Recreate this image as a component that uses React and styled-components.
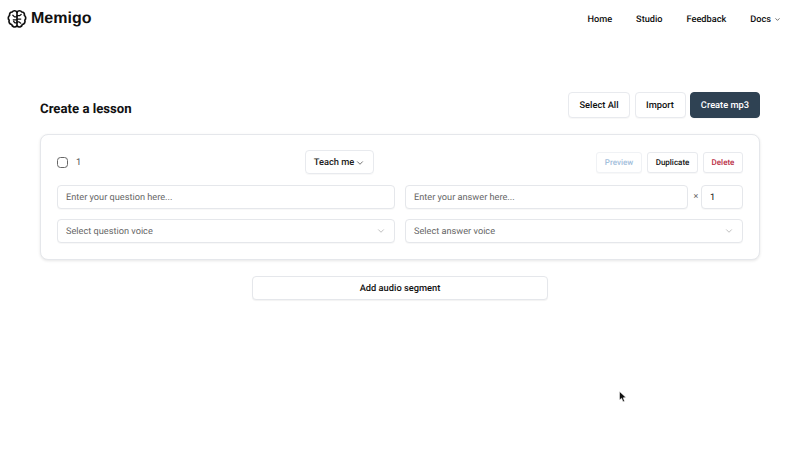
import React from "react";
import styled, { createGlobalStyle } from "styled-components";
import { ChevronDown } from "lucide-react";

const GlobalStyle = createGlobalStyle`
  html, body {
    margin: 0;
    padding: 0;
    background: #fff;
    font-family: Roboto, "Liberation Sans", sans-serif;
    color: #111;
    text-rendering: geometricPrecision;
  }
  * {
    box-sizing: border-box;
  }
  button {
    text-rendering: geometricPrecision;
  }
`;

const Page = styled.div`
  position: relative;
  width: 800px;
  height: 460px;
  overflow: hidden;
`;

const Header = styled.header`
  display: flex;
  align-items: center;
  justify-content: space-between;
  height: 38px;
  padding: 0 19px 0 7px;
`;

const Logo = styled.div`
  display: flex;
  align-items: center;
  gap: 4px;
  font-family: "Liberation Sans", Arial, sans-serif;
  font-size: 16px;
  font-weight: 700;
  color: #111;
`;

const Nav = styled.nav`
  display: flex;
  align-items: center;
  gap: 24px;
  padding-top: 1px;
`;

const NavLink = styled.a`
  display: flex;
  align-items: center;
  gap: 3px;
  font-size: 9.2px;
  font-weight: 500;
  color: #111;
`;

const Main = styled.main`
  display: flex;
  flex-direction: column;
  padding: 54px 40px 0;
`;

const TitleRow = styled.div`
  display: flex;
  align-items: center;
  justify-content: space-between;
  height: 26px;
  margin-bottom: 16px;
`;

const Title = styled.h1`
  margin: 9px 0 0;
  font-size: 13.2px;
  font-weight: 700;
  color: #111;
`;

const Actions = styled.div`
  display: flex;
  gap: 4.5px;
`;

const ActionButton = styled.button`
  height: 26px;
  width: ${(p) => p.$width}px;
  padding: 1px 0 0;
  border: 1px solid ${(p) => (p.$dark ? "#2f4253" : "#e8eaee")};
  border-radius: 4px;
  background: ${(p) => (p.$dark ? "#2f4253" : "#fff")};
  color: ${(p) => (p.$dark ? "#fff" : "#111")};
  font-family: inherit;
  font-size: 9.3px;
  font-weight: 500;
  box-shadow: 0 1px 1px rgba(0, 0, 0, 0.03);
`;

const Card = styled.section`
  display: flex;
  flex-direction: column;
  gap: 10px;
  height: 126px;
  padding: 15px 16px 16px;
  border: 1px solid #e5e7eb;
  border-radius: 8px;
  background: #fff;
  box-shadow: 0 1px 3px rgba(0, 0, 0, 0.1);
`;

const TopRow = styled.div`
  display: grid;
  grid-template-columns: 248px 69px 1fr;
  align-items: center;
  height: 24px;
  margin-bottom: 1px;
`;

const Segment = styled.div`
  display: flex;
  align-items: center;
  gap: 8px;
  padding-top: 1px;
  font-size: 9.3px;
  color: #555;
`;

const Check = styled.span`
  width: 11px;
  height: 11px;
  border: 1px solid #666;
  border-radius: 3.5px;
  background: #fff;
`;

const ModeSelect = styled.div`
  display: flex;
  align-items: center;
  justify-content: center;
  gap: 1px;
  height: 24px;
  padding-top: 1px;
  border: 1px solid #e8eaee;
  border-radius: 4px;
  font-size: 9.3px;
  font-weight: 500;
  color: #222;
  box-shadow: 0 1px 1px rgba(0, 0, 0, 0.03);
`;

const RowActions = styled.div`
  display: flex;
  justify-content: flex-end;
  gap: 5px;
`;

const SmallButton = styled.button`
  height: 21px;
  width: ${(p) => p.$width}px;
  padding: 1px 0 0;
  border: 1px solid ${(p) => (p.$faint ? "#f0f2f5" : "#e8eaee")};
  border-radius: 3px;
  background: #fff;
  color: ${(p) => p.$color};
  font-family: inherit;
  font-size: 8px;
  font-weight: 500;
  box-shadow: 0 1px 1px rgba(0, 0, 0, 0.03);
`;

const FieldRow = styled.div`
  display: grid;
  grid-template-columns: 338px 1fr;
  gap: 10px;
`;

const AnswerGroup = styled.div`
  display: flex;
  align-items: center;
`;

const Field = styled.div`
  display: flex;
  align-items: center;
  justify-content: space-between;
  flex: ${(p) => (p.$fixed ? "0 0 42px" : "1")};
  height: 24px;
  padding: 0 8px;
  border: 1px solid #e5e7eb;
  border-radius: 4px;
  background: #fff;
  font-size: 9.2px;
  color: ${(p) => (p.$filled ? "#111" : "#666")};
  box-shadow: 0 1px 1px rgba(0, 0, 0, 0.03);
`;

const Times = styled.span`
  width: 13px;
  padding-left: 3px;
  text-align: center;
  font-size: 9px;
  color: #666;
`;

const AddRow = styled.div`
  display: flex;
  justify-content: center;
  margin-top: 16px;
`;

const AddButton = styled.button`
  width: 296px;
  height: 24px;
  padding: 0;
  border: 1px solid #e5e7eb;
  border-radius: 4px;
  background: #fff;
  font-family: inherit;
  font-size: 9.3px;
  font-weight: 500;
  color: #111;
  box-shadow: 0 1px 1px rgba(0, 0, 0, 0.05);
`;

const Cursor = styled.svg`
  position: absolute;
  left: 619px;
  top: 391px;
`;

const BrainLogo = () => (
  <svg width="20" height="20" viewBox="0 0 24 24" fill="none" stroke="#111" strokeWidth="2" strokeLinecap="round" strokeLinejoin="round">
    <path d="M12 4C10.8 1.6 7.6 1.4 6.2 3.6C4 3.6 2.6 5.6 3.2 7.6C1.2 9 1 12 2.6 13.4C1.8 15.8 3.2 18.2 5.6 18.6C6.2 21.4 10 22.8 12 20.2C14 22.8 17.8 21.4 18.4 18.6C20.8 18.2 22.2 15.8 21.4 13.4C23 12 22.8 9 20.8 7.6C21.4 5.6 20 3.6 17.8 3.6C16.4 1.4 13.2 1.6 12 4Z" />
    <path d="M12 4V20.2" />
    <path d="M12 9.5H9L7 7.5M12 13H7.5M12 16.5H9.5L8 15M12 8H15L17 6.5M12 12H16.5M12 15.5H14.5L16.5 17" strokeWidth="1.5" />
  </svg>
);

const voices = ["Select question voice", "Select answer voice"];

export default function App() {
  return (
    <Page>
      <GlobalStyle />
      <Header>
        <Logo>
          <BrainLogo />
          Memigo
        </Logo>
        <Nav>
          <NavLink>Home</NavLink>
          <NavLink>Studio</NavLink>
          <NavLink>Feedback</NavLink>
          <NavLink>
            Docs <ChevronDown size={7} strokeWidth={2} />
          </NavLink>
        </Nav>
      </Header>
      <Main>
        <TitleRow>
          <Title>Create a lesson</Title>
          <Actions>
            <ActionButton $width={62}>Select All</ActionButton>
            <ActionButton $width={51}>Import</ActionButton>
            <ActionButton $width={70} $dark>
              Create mp3
            </ActionButton>
          </Actions>
        </TitleRow>
        <Card>
          <TopRow>
            <Segment>
              <Check />1
            </Segment>
            <ModeSelect>
              Teach me <ChevronDown size={10} strokeWidth={1.5} />
            </ModeSelect>
            <RowActions>
              <SmallButton $width={46} $faint $color="#a3c0dc">
                Preview
              </SmallButton>
              <SmallButton $width={51} $color="#111">
                Duplicate
              </SmallButton>
              <SmallButton $width={40} $color="#b92d45">
                Delete
              </SmallButton>
            </RowActions>
          </TopRow>
          <FieldRow>
            <Field>Enter your question here...</Field>
            <AnswerGroup>
              <Field>Enter your answer here...</Field>
              <Times>×</Times>
              <Field $fixed $filled>
                1
              </Field>
            </AnswerGroup>
          </FieldRow>
          <FieldRow>
            {voices.map((v) => (
              <Field key={v}>
                {v}
                <ChevronDown size={10} strokeWidth={1.5} color="#999" />
              </Field>
            ))}
          </FieldRow>
        </Card>
        <AddRow>
          <AddButton>Add audio segment</AddButton>
        </AddRow>
      </Main>
      <Cursor width="9" height="12" viewBox="0 0 9 12">
        <path d="M0.5 0.5 L0.5 9 L2.6 7.2 L4 10.8 L5.5 10.2 L4.2 6.8 L7 6.6 Z" fill="#111" stroke="#fff" strokeWidth="0.5" />
      </Cursor>
    </Page>
  );
}
